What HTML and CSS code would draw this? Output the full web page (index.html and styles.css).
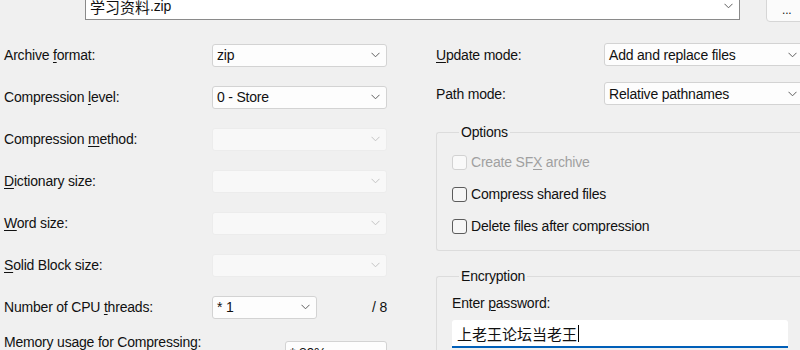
FILE: index.html
```html
<!DOCTYPE html>
<html lang="en">
<head>
    <meta charset="UTF-8">
    <title>Add to Archive</title>
    <link rel="stylesheet" href="styles.css">
</head>
<body>
    <div class="dialog">
        <div class="top">
            <span class="archive-label"><u>A</u>rchive:</span>
            <div class="combo archive-combo">
                <span class="cjk">学习资料</span>.zip
                <svg class="chev" width="9" height="6" viewBox="0 0 9 6"><polyline points="0.5,0.8 4.5,4.8 8.5,0.8"/></svg>
            </div>
            <div class="browse">...</div>
        </div>

        <div class="main">
            <div class="left">
                <span class="lbl">Archive <u>f</u>ormat:</span>
                <div class="combo">zip<svg class="chev" width="9" height="6" viewBox="0 0 9 6"><polyline points="0.5,0.8 4.5,4.8 8.5,0.8"/></svg></div>

                <span class="lbl">Compression <u>l</u>evel:</span>
                <div class="combo">0 - Store<svg class="chev" width="9" height="6" viewBox="0 0 9 6"><polyline points="0.5,0.8 4.5,4.8 8.5,0.8"/></svg></div>

                <span class="lbl">Compression <u>m</u>ethod:</span>
                <div class="combo off"><svg class="chev" width="9" height="6" viewBox="0 0 9 6"><polyline points="0.5,0.8 4.5,4.8 8.5,0.8"/></svg></div>

                <span class="lbl"><u>D</u>ictionary size:</span>
                <div class="combo off"><svg class="chev" width="9" height="6" viewBox="0 0 9 6"><polyline points="0.5,0.8 4.5,4.8 8.5,0.8"/></svg></div>

                <span class="lbl"><u>W</u>ord size:</span>
                <div class="combo off"><svg class="chev" width="9" height="6" viewBox="0 0 9 6"><polyline points="0.5,0.8 4.5,4.8 8.5,0.8"/></svg></div>

                <span class="lbl"><u>S</u>olid Block size:</span>
                <div class="combo off"><svg class="chev" width="9" height="6" viewBox="0 0 9 6"><polyline points="0.5,0.8 4.5,4.8 8.5,0.8"/></svg></div>

                <span class="lbl">Number of CPU <u>t</u>hreads:</span>
                <div class="cpu">
                    <div class="combo small">* 1<svg class="chev" width="9" height="6" viewBox="0 0 9 6"><polyline points="0.5,0.8 4.5,4.8 8.5,0.8"/></svg></div>
                    <span>/ 8</span>
                </div>

                <span class="lbl mem-lbl">Memory usage for Compressing:</span>
                <div class="combo mem">* 80%</div>
            </div>

            <div class="right">
                <div class="row">
                    <span class="rlbl"><u>U</u>pdate mode:</span>
                    <div class="combo wide">Add and replace files<svg class="chev" width="9" height="6" viewBox="0 0 9 6"><polyline points="0.5,0.8 4.5,4.8 8.5,0.8"/></svg></div>
                </div>
                <div class="row">
                    <span class="rlbl">Path mode:</span>
                    <div class="combo wide">Relative pathnames<svg class="chev" width="9" height="6" viewBox="0 0 9 6"><polyline points="0.5,0.8 4.5,4.8 8.5,0.8"/></svg></div>
                </div>

                <fieldset class="group options">
                    <legend>Options</legend>
                    <div class="check disabled"><span class="box"></span><span>Create SF<u>X</u> archive</span></div>
                    <div class="check"><span class="box"></span><span>Compress shared files</span></div>
                    <div class="check"><span class="box"></span><span>Delete files after compression</span></div>
                </fieldset>

                <fieldset class="group encryption">
                    <legend>Encryption</legend>
                    <div class="pw-label">Enter <u>p</u>assword:</div>
                    <div class="pw-input"><span class="cjk">上老王论坛当老王</span><span class="caret"></span></div>
                </fieldset>
            </div>
        </div>
    </div>
</body>
</html>
```

FILE: styles.css
```css
*{
    margin: 0;
    padding: 0;
    box-sizing: border-box;
}
body{
    background-color: #f0f0f0;
    width: 800px;
    height: 350px;
    overflow: hidden;
    font-family: "Liberation Sans", Arial, sans-serif;
    font-size: 14px;
    letter-spacing: -0.2px;
    color: #111;
}
u{
    text-decoration-thickness: 1px;
    text-underline-offset: 2px;
}
.cjk{
    font-family: "Noto Sans CJK SC", sans-serif;
    font-size: 15px;
    letter-spacing: 0;
}
.dialog{
    width: 800px;
}
.top{
    display: flex;
    align-items: flex-end;
    height: 24px;
    margin-top: -4px;
    position: relative;
}
.archive-label{
    position: absolute;
    left: 4px;
    top: -12px;
    line-height: 16px;
}
.combo{
    display: flex;
    align-items: center;
    justify-content: space-between;
    height: 23px;
    padding: 0 6px 0 4px;
    background-color: #fdfdfd;
    border: 1px solid #d3d3d3;
    border-radius: 3px;
    white-space: nowrap;
}
.chev{
    flex: none;
}
.chev polyline{
    fill: none;
    stroke: #606060;
    stroke-width: 1;
}
.archive-combo{
    flex: none;
    margin-left: 85px;
    width: 655px;
    height: 28px;
    background-color: #fff;
    border-color: #8a8a8a;
    border-radius: 0;
    padding-left: 4px;
    padding-right: 6px;
    justify-content: flex-start;
}
.archive-combo .chev{
    margin-left: auto;
}
.browse{
    flex: none;
    margin-left: 26px;
    width: 60px;
    height: 30px;
    margin-bottom: -2px;
    background-color: #fbfbfb;
    border: 1px solid #d6d6d6;
    border-radius: 4px;
    padding: 10px 0 0 15px;
    line-height: 14px;
    font-size: 12px;
}
.main{
    display: flex;
    margin-top: 14px;
}
.left{
    flex: none;
    width: 436px;
    padding-left: 4px;
    display: grid;
    grid-template-columns: 208px 175px;
    grid-auto-rows: 42px;
    align-items: center;
}
.combo.off{
    background-color: #f8f8f8;
    border-color: #ececec;
    justify-content: flex-end;
}
.combo.off .chev polyline{
    stroke: #c4c4c4;
}
.cpu{
    display: flex;
    align-items: center;
    justify-content: space-between;
}
.combo.small{
    width: 105px;
}
.mem-lbl{
    align-self: start;
    margin-top: 6px;
    white-space: nowrap;
}
.combo.mem{
    align-self: start;
    justify-self: end;
    margin-top: 13px;
    width: 102px;
    align-items: flex-start;
    padding-top: 3px;
}
.right{
    flex: none;
    width: 364px;
    padding-top: 9px;
}
.row{
    display: flex;
    align-items: center;
    margin-bottom: 16px;
}
.rlbl{
    flex: none;
    width: 168px;
}
.combo.wide{
    width: 200px;
    flex: none;
}
.group{
    border: 1px solid #dcdcdc;
    border-right: none;
    border-radius: 3px 0 0 3px;
    width: 380px;
}
.group legend{
    margin-left: 7px;
    padding: 0 2px;
    line-height: 16px;
}
.options{
    margin-top: 19px;
    padding: 6px 0 8px 15px;
}
.check{
    display: flex;
    align-items: center;
    height: 32px;
    gap: 4px;
}
.box{
    flex: none;
    width: 15px;
    height: 15px;
    border: 1px solid #5c5c5c;
    border-radius: 3px;
    background-color: #f6f6f6;
}
.check.disabled{
    color: #a0a0a0;
}
.check.disabled .box{
    border-color: #d2d2d2;
    background-color: #f9f9f9;
}
.encryption{
    margin-top: 17px;
    padding: 11px 0 10px 15px;
    height: 120px;
}
.pw-label{
    line-height: 16px;
}
.pw-input{
    margin-top: 9px;
    width: 336px;
    height: 28px;
    background-color: #fff;
    border-bottom: 2px solid #005fb8;
    border-radius: 3px 3px 0 0;
    padding-left: 5px;
    display: flex;
    align-items: center;
}
.caret{
    width: 1px;
    height: 17px;
    background-color: #000;
    margin-left: 1px;
}
```
